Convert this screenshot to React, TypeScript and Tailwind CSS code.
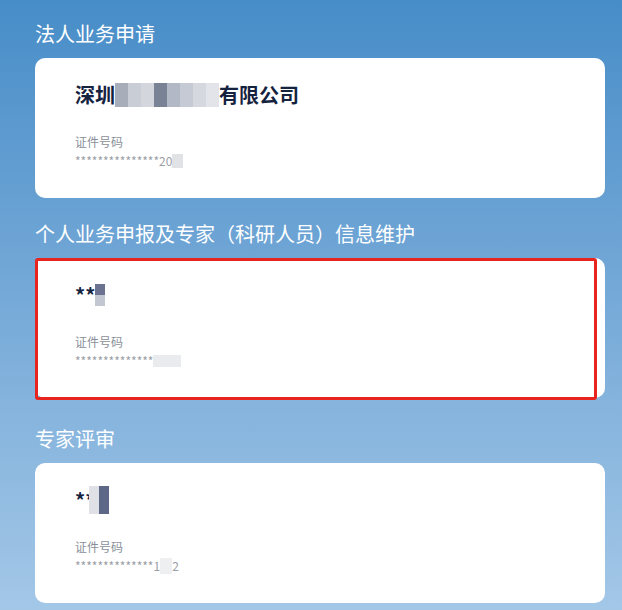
const font = "font-['Noto_Sans_CJK_SC','Noto_Sans',sans-serif]";

function Mosaic({ cells }: { cells: string[] }) {
  return (
    <span className="inline-flex h-[24px] align-middle">
      {cells.map((c, i) => (
        <span key={i} className={`w-[13px] h-full ${c}`} />
      ))}
    </span>
  );
}

function Heading({ children }: { children: React.ReactNode }) {
  return (
    <h2 className="pt-[21px] pb-[11px] text-[20px] leading-[26px] text-white font-normal">
      {children}
    </h2>
  );
}

function Card({
  name,
  id,
  marked,
}: {
  name: React.ReactNode;
  id: React.ReactNode;
  marked?: boolean;
}) {
  return (
    <div className="relative bg-white rounded-[10px] h-[140px] pl-10 pt-[22px]">
      <div className="h-[30px] flex items-center text-[20px] font-bold text-[#15233f]">
        {name}
      </div>
      <div className="mt-[23px] text-[12px] leading-[18px] text-[#8a8f99]">证件号码</div>
      <div className="mt-[1px] text-[12px] leading-[18px] text-[#9a9ea6] flex items-center">{id}</div>
      {marked && (
        <div className="absolute left-0 top-0 right-[8px] bottom-[-2px] border-[3px] border-[#e8241f] rounded-[3px]" />
      )}
    </div>
  );
}

export default function App() {
  return (
    <div className={`w-[622px] h-[610px] overflow-hidden bg-gradient-to-b from-[#478dc8] to-[#a3c7e7] ${font}`}>
      <div className="ml-[35px] w-[570px]">
        <Heading>法人业务申请</Heading>
        <Card
          name={
            <>
              深圳
              <Mosaic cells={["bg-[#a7adb9]", "bg-[#c9cdd6]", "bg-[#d3d6dd]", "bg-[#7a8396]", "bg-[#b2b8c6]", "bg-[#c6cad4]", "bg-[#d5d8df]", "bg-[#e2e4e9]"]} />
              有限公司
            </>
          }
          id={
            <>
              ***************20
              <span className="inline-block w-[11px] h-[14px] bg-[#e1e2e6]" />
            </>
          }
        />
        <div className="pt-[2px]">
          <Heading>个人业务申报及专家（科研人员）信息维护</Heading>
        </div>
        <Card
          marked
          name={
            <>
              **
              <span className="inline-flex flex-col w-[10px] h-[22px]">
                <span className="h-1/2 bg-[#6b7390]" />
                <span className="h-1/2 bg-[#c3c7d1]" />
              </span>
            </>
          }
          id={
            <>
              **************
              <span className="inline-block w-[28px] h-[12px] bg-[#eaebee]" />
            </>
          }
        />
        <div className="pt-[7px]">
          <Heading>专家评审</Heading>
        </div>
        <Card
          name={
            <>
              **
              <span className="inline-flex w-[20px] h-[28px] -ml-[6px]">
                <span className="w-1/2 bg-[#dfe1e6]" />
                <span className="w-1/2 bg-[#5c6886]" />
              </span>
            </>
          }
          id={
            <>
              **************1
              <span className="inline-block w-[12px] h-[16px] bg-[#eeeff1]" />
              2
            </>
          }
        />
      </div>
    </div>
  );
}
